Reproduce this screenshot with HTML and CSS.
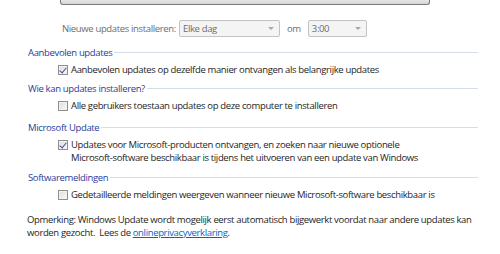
FILE: index.html
```html
<!DOCTYPE html>
<html lang="nl">
<head>
  <meta charset="UTF-8" />
  <title>Windows Update - Instellingen wijzigen</title>
  <link rel="stylesheet" href="styles.css">
</head>
<body>
  <div class="top-bar"></div>

  <div class="schedule">
    <span class="schedule-label">Nieuwe updates installeren:</span>
    <div class="select select-day"><span>Elke dag</span><i class="arrow"></i></div>
    <span class="schedule-at">om</span>
    <div class="select select-time"><span>3:00</span><i class="arrow"></i></div>
  </div>

  <div class="group group-recommended">
    <div class="group-title"><span>Aanbevolen updates</span></div>
    <label class="check-row">
      <span class="box checked"></span>
      <span>Aanbevolen updates op dezelfde manier ontvangen als belangrijke updates</span>
    </label>
  </div>

  <div class="group group-who">
    <div class="group-title"><span>Wie kan updates installeren?</span></div>
    <label class="check-row">
      <span class="box"></span>
      <span>Alle gebruikers toestaan updates op deze computer te installeren</span>
    </label>
  </div>

  <div class="group group-ms">
    <div class="group-title"><span>Microsoft Update</span></div>
    <label class="check-row">
      <span class="box checked"></span>
      <span>Updates voor Microsoft-producten ontvangen, en zoeken naar nieuwe optionele<br>Microsoft-software beschikbaar is tijdens het uitvoeren van een update van Windows</span>
    </label>
  </div>

  <div class="group group-notify">
    <div class="group-title"><span>Softwaremeldingen</span></div>
    <label class="check-row">
      <span class="box"></span>
      <span>Gedetailleerde meldingen weergeven wanneer nieuwe Microsoft-software beschikbaar is</span>
    </label>
  </div>

  <p class="note">Opmerking: Windows Update wordt mogelijk eerst automatisch bijgewerkt voordat naar andere updates kan<br>worden gezocht.&nbsp; Lees de <a href="#">onlineprivacyverklaring</a>.</p>
</body>
</html>
```

FILE: styles.css
```css
body {
  margin: 0;
  padding: 0;
  background: #fff;
  color: #1e1e1e;
  font-family: "Open Sans", "Noto Sans", sans-serif;
  font-size: 9.5px;
  letter-spacing: -0.35px;
  line-height: 13px;
  width: 500px;
  height: 254px;
  overflow: hidden;
  white-space: nowrap;
}
.top-bar {
  margin-left: 60px;
  width: 368px;
  height: 4px;
  background: linear-gradient(#e6e6e6, #d6d6d6);
  border: 1px solid #7a7a7a;
  border-top: none;
  border-radius: 0 0 3px 3px;
}
.schedule {
  display: flex;
  align-items: center;
  margin: 15px 0 0 62px;
  height: 17px;
  color: #6d6d6d;
}
.schedule-label {
  width: 117px;
}
.select {
  display: flex;
  align-items: center;
  justify-content: space-between;
  box-sizing: border-box;
  height: 17px;
  padding: 0 5px 0 3px;
  border: 1px solid #c3c3c3;
  border-radius: 2px;
  background: #f4f4f4;
  color: #6d6d6d;
}
.select-day {
  width: 101px;
}
.select-time {
  width: 59px;
}
.schedule-at {
  margin: 0 7px 0 7px;
}
.arrow {
  width: 0;
  height: 0;
  border-left: 3px solid transparent;
  border-right: 3px solid transparent;
  border-top: 3px solid #a8a8a8;
}
.group {
  margin-left: 28px;
  width: 450px;
}
.group-title {
  display: flex;
  align-items: center;
  color: #2a3c9c;
}
.group-title::after {
  content: "";
  flex: 1;
  height: 1px;
  margin-left: 2px;
  background: #d5dde9;
}
.group-recommended {
  margin-top: 9px;
}
.group-who {
  margin-top: 6px;
}
.group-ms {
  margin-top: 9px;
}
.group-notify {
  margin-top: 7px;
}
.check-row {
  display: flex;
  align-items: flex-start;
  margin: 4px 0 0 30px;
}
.box {
  flex: none;
  box-sizing: border-box;
  width: 10px;
  height: 10px;
  margin: 2px 3px 0 0;
  border: 1px solid #8f8f8f;
  background: linear-gradient(135deg, #dcdcdc, #fafafa);
  box-shadow: inset 0 0 0 1px #f2f2f2;
  position: relative;
}
.box.checked::after {
  content: "";
  position: absolute;
  left: 2px;
  top: 0;
  width: 3px;
  height: 6px;
  border: solid #3e5390;
  border-width: 0 1.5px 1.5px 0;
  transform: rotate(40deg);
}
.note {
  margin: 12px 0 0 27px;
  color: #1e1e1e;
}
.note a {
  color: #0066cc;
}
```
